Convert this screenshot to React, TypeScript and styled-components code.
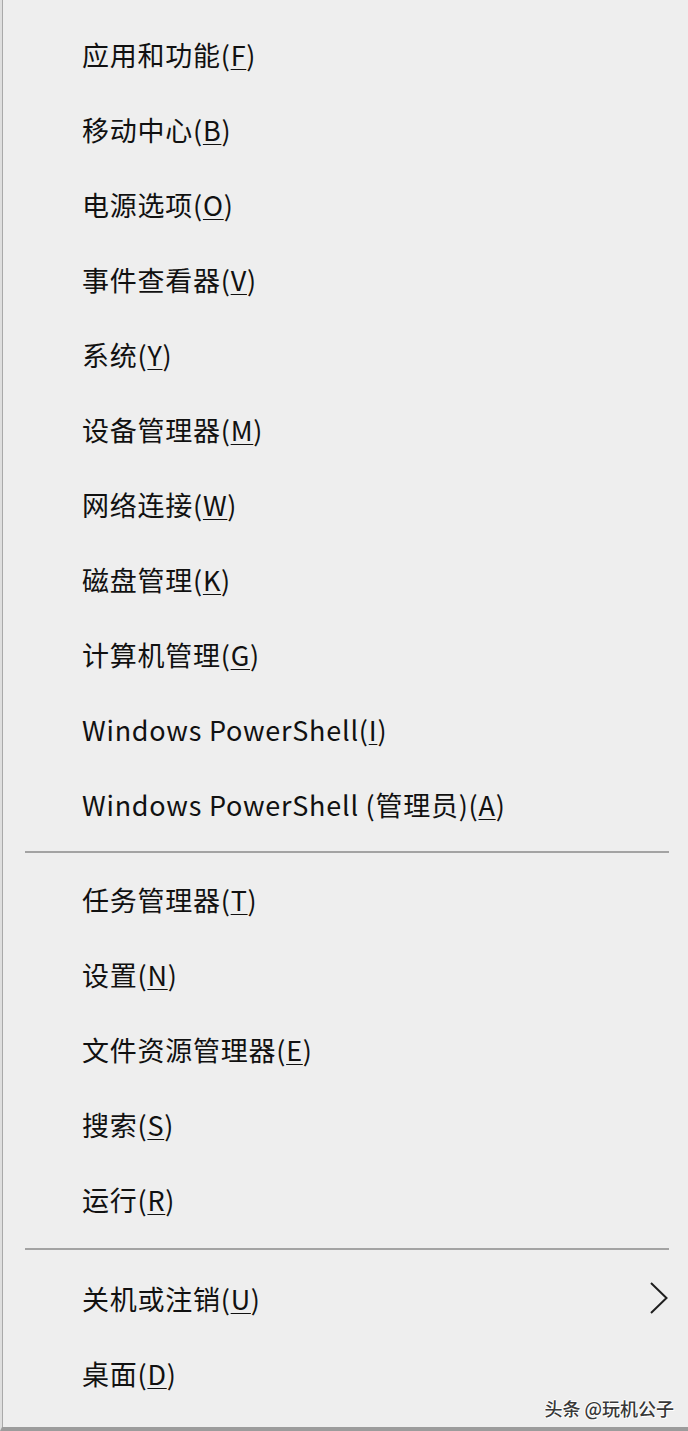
import React from "react";
import styled, { createGlobalStyle } from "styled-components";

const GlobalStyle = createGlobalStyle`
  html, body {
    margin: 0;
    padding: 0;
    background: #eeeeee;
  }
`;

const Frame = styled.div`
  position: relative;
  box-sizing: border-box;
  width: 688px;
  height: 1431px;
  background: #eeeeee;
  border-left: 2px solid #dedede;
  border-bottom: 4px solid #9c9c9c;
  overflow: hidden;
`;

const Menu = styled.div`
  box-sizing: border-box;
  height: 100%;
  border-left: 1px solid #a9a9a9;
  padding-top: 16.5px;
  display: flex;
  flex-direction: column;
  font-family: "Noto Sans CJK SC", "Noto Sans", sans-serif;
  color: #111111;
`;

const Item = styled.div`
  height: 75px;
  flex: none;
  display: flex;
  align-items: center;
  justify-content: space-between;
  padding-left: 79px;
  padding-right: 19px;
  font-size: 27px;
  line-height: 1;
  white-space: nowrap;
`;

const Label = styled.span`
  display: inline-block;
  letter-spacing: 0.75px;
`;

const Key = styled.u`
  text-decoration: underline;
  text-decoration-thickness: 1px;
  text-underline-offset: 3px;
`;

const Separator = styled.div<{ $top: number; $bottom: number }>`
  flex: none;
  height: 2px;
  margin: ${(p) => p.$top}px 19px ${(p) => p.$bottom}px 22px;
  background: #a3a3a3;
`;

const Watermark = styled.div`
  position: absolute;
  right: 14px;
  bottom: 7px;
  font-family: "Noto Sans CJK SC", sans-serif;
  font-size: 18px;
  font-weight: 500;
  line-height: 24px;
  color: #383838;
  text-shadow: 1px 1px 0 #ffffff, -1px 0 0 #ffffff, 0 -1px 0 #ffffff;
`;

const Chevron = () => (
  <svg width="20" height="34" viewBox="0 0 20 34" aria-hidden="true">
    <polyline
      points="2,2 17.5,17 2,32"
      fill="none"
      stroke="#1e1e1e"
      strokeWidth="2"
      strokeLinejoin="miter"
    />
  </svg>
);

type Entry = { text: string; key: string; sub?: boolean };

const group1: Entry[] = [
  { text: "应用和功能", key: "F" },
  { text: "移动中心", key: "B" },
  { text: "电源选项", key: "O" },
  { text: "事件查看器", key: "V" },
  { text: "系统", key: "Y" },
  { text: "设备管理器", key: "M" },
  { text: "网络连接", key: "W" },
  { text: "磁盘管理", key: "K" },
  { text: "计算机管理", key: "G" },
  { text: "Windows PowerShell", key: "I" },
  { text: "Windows PowerShell (管理员)", key: "A" },
];

const group2: Entry[] = [
  { text: "任务管理器", key: "T" },
  { text: "设置", key: "N" },
  { text: "文件资源管理器", key: "E" },
  { text: "搜索", key: "S" },
  { text: "运行", key: "R" },
];

const group3: Entry[] = [
  { text: "关机或注销", key: "U", sub: true },
  { text: "桌面", key: "D" },
];

const Row = ({ e }: { e: Entry }) => (
  <Item>
    <Label>
      {e.text}(<Key>{e.key}</Key>)
    </Label>
    {e.sub ? <Chevron /> : null}
  </Item>
);

export default function App() {
  return (
    <>
      <GlobalStyle />
      <Frame>
        <Menu>
          {group1.map((e) => (
            <Row key={e.key} e={e} />
          ))}
          <Separator $top={9.5} $bottom={9} />
          {group2.map((e) => (
            <Row key={e.key} e={e} />
          ))}
          <Separator $top={10.5} $bottom={11} />
          {group3.map((e) => (
            <Row key={e.key} e={e} />
          ))}
        </Menu>
        <Watermark>头条 @玩机公子</Watermark>
      </Frame>
    </>
  );
}
